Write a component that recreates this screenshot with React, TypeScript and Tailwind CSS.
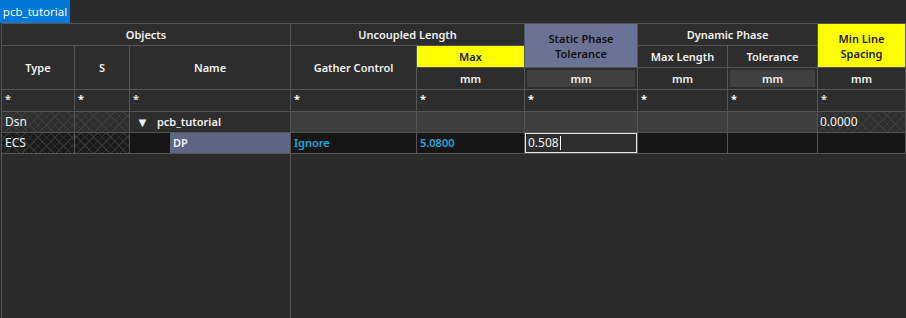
import React from "react";

const hatch =
  "[background-image:repeating-linear-gradient(45deg,#3b3b3b_0_1px,transparent_1px_6px),repeating-linear-gradient(-45deg,#3b3b3b_0_1px,transparent_1px_6px)]";
const hatchDark =
  "[background-image:repeating-linear-gradient(45deg,#333_0_1px,transparent_1px_6px),repeating-linear-gradient(-45deg,#333_0_1px,transparent_1px_6px)]";

const Head = ({ className = "", children }: { className?: string; children?: React.ReactNode }) => (
  <div className={`flex items-center justify-center text-center text-[11px] font-semibold leading-[15px] ${className}`}>
    {children}
  </div>
);

const Filter = ({ col }: { col: string }) => (
  <div className={`${col} row-start-4 bg-[#2d2d2d] px-[3px] pt-[3px] text-[11px] font-bold leading-[12px] text-white`}>*</div>
);

export default function App() {
  return (
    <div className="flex h-[318px] w-[906px] flex-col bg-[#2b2b2b] font-['Noto_Sans',sans-serif] text-[12px] text-[#f2f2f2]">
      <div className="h-[23px] shrink-0">
        <div className="flex h-[23px] w-[70px] items-center justify-center bg-[#0078d7] text-[11.5px] text-white">
          pcb_tutorial
        </div>
      </div>

      <div className="ml-px grid w-[905px] grid-cols-[72px_54px_160px_125px_107px_112px_89px_89px_87px] grid-rows-[21px_21px_21px_21px_20px_20px] gap-px border border-[#555] bg-[#555]">
        {/* header row 1 */}
        <Head className="col-span-3 col-start-1 row-start-1 bg-[#2d2d2d]">Objects</Head>
        <Head className="col-span-2 col-start-4 row-start-1 bg-[#2d2d2d]">Uncoupled Length</Head>
        <Head className="col-start-6 row-span-2 row-start-1 bg-[#6b7394] text-[#111]">
          Static Phase
          <br />
          Tolerance
        </Head>
        <Head className="col-span-2 col-start-7 row-start-1 bg-[#2d2d2d]">Dynamic Phase</Head>
        <Head className="col-start-9 row-span-2 row-start-1 bg-[#ffff00] text-[#1a1a1a]">
          Min Line
          <br />
          Spacing
        </Head>

        {/* header rows 2-3 */}
        <Head className="col-start-1 row-span-2 row-start-2 bg-[#2d2d2d]">Type</Head>
        <Head className="col-start-2 row-span-2 row-start-2 bg-[#2d2d2d]">S</Head>
        <Head className="col-start-3 row-span-2 row-start-2 bg-[#2d2d2d]">Name</Head>
        <Head className="col-start-4 row-span-2 row-start-2 bg-[#2d2d2d]">Gather Control</Head>
        <Head className="col-start-5 row-start-2 bg-[#ffff00] text-[#1a1a1a]">Max</Head>
        <Head className="col-start-7 row-start-2 bg-[#2d2d2d]">Max Length</Head>
        <Head className="col-start-8 row-start-2 bg-[#2d2d2d]">Tolerance</Head>

        {/* units */}
        <Head className="col-start-5 row-start-3 bg-[#2d2d2d]">mm</Head>
        <div className="col-start-6 row-start-3 bg-[#2d2d2d] p-[2px]">
          <Head className="h-full bg-[#404040]">mm</Head>
        </div>
        <Head className="col-start-7 row-start-3 bg-[#2d2d2d]">mm</Head>
        <div className="col-start-8 row-start-3 bg-[#2d2d2d] p-[2px]">
          <Head className="h-full bg-[#404040]">mm</Head>
        </div>
        <Head className="col-start-9 row-start-3 bg-[#2d2d2d]">mm</Head>

        {/* filter row */}
        <Filter col="col-start-1" />
        <Filter col="col-start-2" />
        <Filter col="col-start-3" />
        <Filter col="col-start-4" />
        <Filter col="col-start-5" />
        <Filter col="col-start-6" />
        <Filter col="col-start-7" />
        <Filter col="col-start-8" />
        <Filter col="col-start-9" />

        {/* Dsn row */}
        <div className={`col-start-1 row-start-5 flex items-center bg-[#2e2e2e] px-[3px] ${hatch}`}>Dsn</div>
        <div className={`col-start-2 row-start-5 bg-[#2e2e2e] ${hatch}`} />
        <div className="col-start-3 row-start-5 flex items-center gap-[8px] bg-[#2d2d2d] pl-[6px] text-[11px] font-semibold">
          <span className="text-[13px] leading-none">▼</span>
          <span>pcb_tutorial</span>
        </div>
        <div className="col-start-4 row-start-5 bg-[#3e3e3e]" />
        <div className="col-start-5 row-start-5 bg-[#3e3e3e]" />
        <div className="col-start-6 row-start-5 bg-[#3e3e3e]" />
        <div className="col-start-7 row-start-5 bg-[#3e3e3e]" />
        <div className="col-start-8 row-start-5 bg-[#3e3e3e]" />
        <div className={`col-start-9 row-start-5 flex items-center bg-[#2e2e2e] px-[2px] ${hatch}`}>0.0000</div>

        {/* ECS row */}
        <div className={`col-start-1 row-start-6 flex items-center bg-[#1a1a1a] px-[3px] ${hatchDark}`}>ECS</div>
        <div className={`col-start-2 row-start-6 bg-[#1a1a1a] ${hatchDark}`} />
        <div className="col-start-3 row-start-6 flex bg-[#161616]">
          <div className="w-[40px]" />
          <div className="flex flex-1 items-center bg-[#5e6585] pl-[3px] text-[11px] font-semibold">DP</div>
        </div>
        <div className="col-start-4 row-start-6 flex items-center bg-[#161616] px-[3px] text-[11px] font-semibold text-[#1ea7d9]">
          Ignore
        </div>
        <div className="col-start-5 row-start-6 flex items-center bg-[#161616] px-[3px] text-[11px] font-semibold text-[#1ea7d9]">
          5.0800
        </div>
        <div className="col-start-6 row-start-6 flex items-center border border-[#e6e6e6] bg-[#2d2d2d] px-[2px]">
          <span>0.508</span>
          <span className="ml-px h-[14px] w-px bg-white" />
        </div>
        <div className="col-start-7 row-start-6 bg-[#161616]" />
        <div className="col-start-8 row-start-6 bg-[#161616]" />
        <div className="col-start-9 row-start-6 bg-[#161616]" />
      </div>

      <div className="ml-px flex flex-1 border-l border-[#555]">
        <div className="w-[289px] border-r border-[#555]" />
      </div>
    </div>
  );
}
